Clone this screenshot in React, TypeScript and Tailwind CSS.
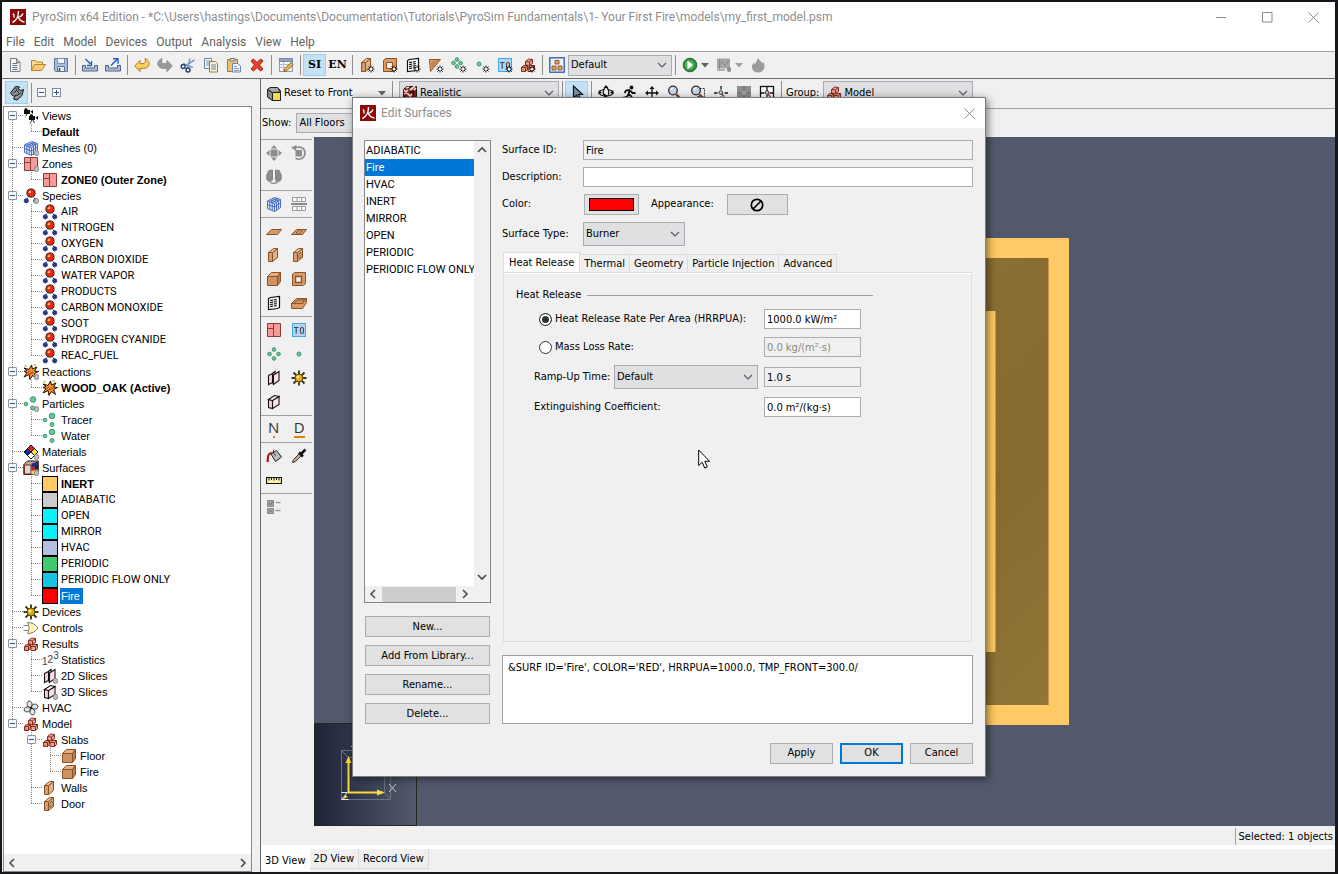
import React, { useState } from "react";
import type { ReactNode } from "react";

/* ------------------------------------------------------------------ */
/* Icons, all drawn on a 16 x 16 grid                                  */
/* ------------------------------------------------------------------ */

function Svg({ children, size = 16 }: { children: ReactNode; size?: number }) {
  return (
    <svg width={size} height={size} viewBox="0 0 16 16" fill="none" aria-hidden="true" className="block shrink-0">
      {children}
    </svg>
  );
}

const spark = (
  <g stroke="#111" strokeWidth="1">
    <path d="M12 8.500v7M8.500 12h7M9.500 9.500l5 5M14.500 9.500l-5 5" />
    <circle cx="12" cy="12" r="1.200" fill="#fff" stroke="none" />
  </g>
);

const pill = <rect x="11.500" y="10.500" width="4" height="5" rx="1.800" fill="#bdbdbd" stroke="#8a8a8a" />;

const Blocks = (
  <g fill="#e8a796" stroke="#8a2a20">
    <path d="M5.500 4.500l3-2.500 4 .5v4l-3 2-4-.5z" />
    <path d="M5.500 4.500l4 .5v4M9.500 5l3-2.500" />
    <path fill="#d8915a" d="M1.500 10.500l2-2h4v4l-2 2h-4z" />
    <path d="M1.500 10.500h4v4M5.500 10.500l2-2" />
    <path d="M8 10.500l2-2h4.500v4l-2 2H8z" />
    <path d="M8 10.500h4.500v4M12.500 10.500l2-2" />
  </g>
);

const Slice = (
  <g stroke="#1a0d14" strokeWidth="1.100">
    <path fill="#f6d3e3" d="M2.500 5.500l4-2v9l-4 2z" />
    <path fill="#fbe4ef" d="M7.500 5l5.500-3.500v9l-5.500 4z" />
    <path d="M6.500 3.500l2.500-2v2.500M6.500 12.500l1 2" />
  </g>
);

const Block3 = (
  <g fill="#cf9260" stroke="#8b5328">
    <path fill="#e3b184" d="M1.500 5.500l4-4h9l-3 4z" />
    <path fill="#b87b49" d="M11.500 5.500l3-4v9l-3 4z" />
    <path d="M1.500 5.500h10v9h-10z" />
  </g>
);

const Wall = (
  <g fill="#d89b69" stroke="#8b5328">
    <path d="M2.500 5.500l4 0v9l-4 0z" />
    <path fill="#e3b184" d="M6.500 5.500l5-4v9l-5 4z" />
    <path fill="#e9c29c" d="M2.500 5.500l5-4h4l-5 4z" />
  </g>
);

const Vent = (
  <g stroke="#111" strokeWidth="1.200">
    <path fill="#fff" d="M2.500 3.500l2-1 9-1v11l-2 1-9 1z" />
    <path d="M4 5.500l7.500-1M4 7.500l7.500-1M4 9.500l7.500-1M4 11.500l7.500-1" strokeDasharray="3 .8" />
  </g>
);

const Mesh = (
  <g stroke="#3a62b8" strokeWidth=".9">
    <path fill="#dfe8fa" d="M1.500 5l7-3.500 6 2v8l-6 4-7-3z" />
    <path d="M1.500 5l7 2.500v8M8.500 7.500l6-4M1.500 8.500l7 2.500 6-4M3.800 5.900v7.800M6.200 6.700v7.800M10.500 6.300v8M12.500 5v8M3.800 3.800l6.500 2.400M6 2.600l6.500 2.200M4 6l6.500-3.800M6.200 6.700l6.300-3.900" />
  </g>
);

const Zone = (
  <g stroke="#8d3a3a" fill="#f39c98">
    <path d="M1.500 1.500h13v13h-13zM7.500 1.500v13M1.500 6.500h6" />
  </g>
);

const Molecule = (
  <g>
    <circle cx="8" cy="5" r="4.100" fill="#f4280b" stroke="#2b1a1a" />
    <path d="M5.500 4.500a2.500 2.500 0 012.500-2v2.500H5.500z" fill="#ffb38a" />
    <path d="M5 9.500l-1 1.500M11 9.500l1 1.500" stroke="#333" />
    <circle cx="3.300" cy="12.800" r="2.100" fill="#27368f" stroke="#2f3c86" />
    <circle cx="12.700" cy="12.800" r="2.100" fill="#27368f" stroke="#2f3c86" />
  </g>
);

const Burst = (
  <g>
    <path d="M1 4l5 1.500L8.500 1l1 4L14 3l-2.500 4 4 .5-4 2 2 5-4-3-2.500 4-1-5L1 13l3-4.500L1 7.500l3-1z" fill="#f59a1c" stroke="#1c0d05" strokeWidth="1" />
    <path d="M5.500 6.500l4.500 0 1 2.500-4 1.500-2-1.500z" fill="#e03a1e" />
    <path d="M7 6.500l2 2M6 8l1 1M9 6.500l1 1" stroke="#ffe94f" />
    <path d="M1.500 1.500l2 1M11 .500l2 1M14 13l-1-1" stroke="#c9c31c" strokeWidth="1.500" />
  </g>
);

const dot = (cx: number, cy: number, r: number) => (
  <circle key={`${cx}-${cy}`} cx={cx} cy={cy} r={r} fill="#6cc796" stroke="#3a9a6c" strokeWidth="1" />
);

const Gear = (
  <g>
    <path d="M8 .500v15M.500 8h15M2.500 2.500l11 11M13.500 2.500l-11 11" stroke="#3a3a1c" strokeWidth="1.900" />
    <circle cx="8" cy="8" r="4" fill="#e0a912" stroke="#5a480c" />
    <circle cx="7" cy="7" r="1.500" fill="#fbe88a" />
  </g>
);

const Magnifier = (
  <g>
    <path d="M9.500 9.500l4.500 5" stroke="#7a3c1c" strokeWidth="2.500" />
    <circle cx="6" cy="5.500" r="4.300" fill="#c9d3e6" stroke="#2b2b38" strokeWidth="1.300" />
    <path d="M4 5a2 2 0 012-2" stroke="#fff" />
  </g>
);

const icons: Record<string, ReactNode> = {
  new: (
    <>
      <path d="M3.500 1.500h6l3.500 3.500v9.500h-9.500z" fill="#fdf8e4" stroke="#7a7a8a" />
      <path d="M9.500 1.500v4H13" fill="#e9c96b" stroke="#7a7a8a" />
      <path d="M5.500 6.500h5M5.500 8.500h5M5.500 10.500h5M5.500 12.500h5" stroke="#4f74a8" />
    </>
  ),
  open: (
    <>
      <path d="M1.500 13.500v-10h4l1 1.500h6v3" fill="#f8dc94" stroke="#b5832c" />
      <path d="M1.500 13.500l3-6h11l-4 6z" fill="#f6cf75" stroke="#b5832c" />
    </>
  ),
  save: (
    <>
      <path d="M1.500 1.500h13v13h-12l-1-1z" fill="#a9bddb" stroke="#5c7399" />
      <path d="M4.500 1.500h7v5h-7z" fill="#f5f8fd" stroke="#7d8fae" />
      <path d="M4.500 9.500h7v5h-7z" fill="#e9edf4" stroke="#5c7399" />
      <path d="M6.500 11v3" stroke="#33445f" strokeWidth="1.500" />
    </>
  ),
  import: (
    <>
      <path d="M.500 8.500v5.500h15V8.500h-3v2.500h-9V8.500z" fill="#a9bddb" stroke="#4e6285" />
      <path d="M3.500 2l5 5M9.500 4v4.500H5" stroke="#1d5fc0" strokeWidth="1.400" />
    </>
  ),
  export: (
    <>
      <path d="M.500 8.500v5.500h15V8.500h-3v2.500h-9V8.500z" fill="#a9bddb" stroke="#4e6285" />
      <path d="M6 8.500l6.500-6.500M8 1.700h5v5" stroke="#1d5fc0" strokeWidth="1.400" />
    </>
  ),
  undo: <path d="M.800 9l5.200-5.500v3.200h3c2.200 0 3-1.700 2-5.200 3.300 1.500 4.800 4 4 6.500-.800 2.300-3 3.300-5.500 3.300H6v3.200z" fill="#fbd25e" stroke="#b5761a" />,
  redo: <path d="M15.200 9L10 3.500v3.200H7c-2.200 0-3-1.700-2-5.200C1.700 3 .200 5.500 1 8c.800 2.300 3 3.300 5.500 3.300H10v3.200z" fill="#9a9a9a" stroke="#8a8a8a" />,
  cut: (
    <>
      <path d="M3 6.500l10 4M10 1.500L7.500 11M14.500 3L5 9" stroke="#7d9ac8" strokeWidth="1.500" />
      <circle cx="3.200" cy="9.500" r="2" stroke="#20406f" strokeWidth="1.400" />
      <circle cx="8" cy="13" r="2" stroke="#20406f" strokeWidth="1.400" />
    </>
  ),
  copy: (
    <>
      <path d="M1.500 1.500h7v10h-7z" fill="#f8f3df" stroke="#6d86ad" />
      <path d="M3 4h4M3 6h3M3 8h3" stroke="#7d9ac4" />
      <path d="M6.500 4.500h6l2 2v8.500h-8z" fill="#fbf3d2" stroke="#8a7f4c" />
      <path d="M8 8h5M8 10h5M8 12h5" stroke="#5b84c0" />
    </>
  ),
  paste: (
    <>
      <path d="M1.500 2.500h10v12h-10z" fill="#edc46b" stroke="#a77a26" />
      <path d="M4 1.500h5v2.500H4z" fill="#d5d9e0" stroke="#7a7f8a" />
      <path d="M6.500 6.500h5l3 2.500v6h-8z" fill="#f1f5fb" stroke="#6e86aa" />
      <path d="M8 9.500h3M8 11.500h5M8 13.500h5" stroke="#7d9ac4" />
    </>
  ),
  delete: <path d="M2 4l2.500-2L8 5.500 11.500 2 14 4l-3.500 4L14 12l-2.500 2L8 10.500 4.500 14 2 12l3.500-4z" fill="#e8402a" stroke="#a8200f" />,
  table: (
    <>
      <path d="M1.500 1.500h13v13h-13z" fill="#f4f6f8" stroke="#8a94a4" />
      <path d="M1.500 1.500h13v3h-13z" fill="#8fa3c4" stroke="#7888a4" />
      <path d="M1.500 7.500h13M1.500 10.500h13M5.500 5v9" stroke="#b5bcc6" />
      <path d="M6 14.500l1-3 6-6 2 2-6 6z" fill="#f0b94c" stroke="#8a6420" />
    </>
  ),
  wallNew: (<>{Wall}{spark}</>),
  holeNew: (
    <>
      <path d="M1.500 3.500l2-2h11v11l-2 2h-11z" fill="#d89b69" stroke="#8b5328" />
      <path d="M4.500 5.500h6v6h-6z" fill="#f7ede2" stroke="#8b5328" />
      {spark}
    </>
  ),
  ventNew: (<>{Vent}{spark}</>),
  triNew: (
    <>
      <path d="M1.500 2.500h11l-10 12z" fill="#e0a06c" stroke="#8b5328" />
      <path d="M3.500 4.500l8-1.500-8 9z" fill="#c4834f" />
      {spark}
    </>
  ),
  cloudNew: (<>{dot(6, 2.5, 1.8)}{dot(2.5, 6, 1.8)}{dot(9.5, 6, 1.8)}{dot(6, 9.5, 1.8)}{spark}</>),
  dotNew: (<>{dot(5, 7, 2)}{spark}</>),
  t0: (
    <>
      <rect x="1.500" y="1.500" width="13" height="13" fill="#b4d4f0" stroke="#3daaf0" />
      <path d="M3 5.500h4.500M5.200 5.500v6M9.500 7q0-1.500 1.500-1.500T12.500 7v3q0 1.500-1.500 1.500T9.500 10z" stroke="#3a4656" strokeWidth="1.100" />
    </>
  ),
  t0New: (
    <>
      <rect x="1.500" y="1.500" width="13" height="13" fill="#b4d4f0" stroke="#3daaf0" />
      <path d="M3 5.500h4.500M5.200 5.500v6M9.500 7q0-1.500 1.500-1.500T12.500 7v3q0 1.500-1.500 1.500T9.500 10z" stroke="#3a4656" strokeWidth="1.100" />
      {spark}
    </>
  ),
  blocksNew: (<>{Blocks}{spark}</>),
  floors: (
    <>
      <rect x=".800" y=".800" width="14.400" height="14.400" fill="#eef2fb" stroke="#2f56a8" strokeWidth="1.300" />
      <path d="M6 3.500h4v3.500H6zM3 9h4v4H3zM9 9h4v4H9z" fill="#dca268" stroke="#8b5a2b" />
    </>
  ),
  run: (
    <>
      <circle cx="8" cy="8" r="6.800" fill="#2f8f3a" stroke="#1f6f2a" />
      <circle cx="7.500" cy="8" r="4.700" fill="#58b060" />
      <path d="M5.500 3.500l5.500 4.500-5.500 4.500z" fill="#fff" />
    </>
  ),
  chart: (
    <>
      <path d="M1 1.500h13v10H1z" fill="#a6a6a6" />
      <path d="M3.500 2v10M3 9.500l3-5 3 4 4-5" stroke="#8a8a8a" />
      <path d="M1 13h8" stroke="#9a9a9a" strokeWidth="1.500" />
      <rect x="11" y="10" width="4" height="5" rx="2" fill="#8d8d8d" />
    </>
  ),
  flame: (
    <path d="M8 .500c.500 3 4 3.500 4 6l1.500-1.500c1 2.500 1.500 4.500.500 6.500C13 14 11 15.500 8 15.500S3 14 2.200 11.500C1.500 9 2.500 7 4 5.500l1 2c.500-2.500 2.500-4 3-7z" fill="#9b9b9b" />
  ),
  refresh: (
    <>
      <path d="M1.500 8l5-6.500 4 .5-1.500 2 3 1.500 2.500-1-1.500 6-5 4.500-3.500-1 1.500-2.500-2.500-1z" fill="#8e959c" stroke="#111" />
      <path d="M4.500 8l3-2.500 2.500 2M6 10.500l3-.5 3-2.500M8 4.500l-1.500-1" stroke="#111" />
    </>
  ),
  cube: (
    <>
      <path d="M1.500 3.500l3-2h7l3 3v10h-8l-5-3.500z" fill="#fff" stroke="#222" />
      <path d="M1.500 3.500l5 3v8l-5-3.500z" fill="#8d8d8d" stroke="#222" />
      <path d="M1.500 3.500l3-2h7l3 4.500-8 .5z" fill="#a9a9a9" stroke="#222" />
      <path d="M6.500 6.500h8v8h-8z" fill="#f5d94e" stroke="#222" />
    </>
  ),
  realistic: (
    <>
      <path d="M1.500 4.500l3-3h10v10l-3 3h-10z" fill="#8e1f1b" stroke="#1c1010" />
      <path d="M2 5l4 4M6 5l-4 4M6 9l4 4M10 9l-4 4M8 5l5-4M11 6l3-3M4 3l3-1" stroke="#e9e0dc" strokeWidth="1.700" />
      <path d="M11.500 5v9M2 11l3 3M8 7l3 0" stroke="#1c1010" strokeWidth="1.400" />
    </>
  ),
  pointer: <path d="M4.500 1v12l3-2.800 2 4.800 2-1-2-4.700h4z" fill="#7c93a8" stroke="#111" strokeWidth="1.200" />,
  orbit: (
    <>
      <path d="M6.500 4.500C3.500 4.800 1.500 6 1.500 7.800c0 2 3 3.200 6.500 3.200s6.500-1.200 6.500-3.200c0-1.800-2-3-5-3.300" stroke="#111" strokeWidth="1.200" />
      <path d="M5.500 10C4.500 6 6 2.500 8 2.500s3.500 3.500 2.500 7.500" stroke="#111" strokeWidth="1.200" />
      <path d="M8 0l2.500 3h-5zM6 8.500l4 2.500-4 2.500zM1 5l3 3-4 1zM15 5l-3 3 4 1z" fill="#111" />
    </>
  ),
  walk: (
    <>
      <circle cx="10.500" cy="2.500" r="1.900" fill="#111" />
      <path d="M9 5L7.500 9l3 2.500-1.500 4M7.500 9L6 12l-4.500 1M9 5L5 5.500 3.500 8M9.500 6l2 2h3" stroke="#111" strokeWidth="1.800" />
    </>
  ),
  pan: (
    <>
      <path d="M8 2v12M2 8h12" stroke="#111" strokeWidth="1.300" />
      <path d="M8 1l2.500 3h-5zM8 15l2.500-3h-5zM1 8l3-2.500v5zM15 8l-3-2.500v5z" fill="#111" />
    </>
  ),
  zoom: Magnifier,
  zoomBox: (
    <>
      <path d="M6.500 3.500h8v8h-8" stroke="#333" strokeDasharray="2 1" />
      {Magnifier}
    </>
  ),
  fit: (
    <>
      <path d="M8 1v3.500M8 11.500V15M1 8h3.500M11.500 8H15" stroke="#111" strokeWidth="1.300" />
      <path d="M8 8l3 3.500" stroke="#7a3c1c" strokeWidth="1.500" />
      <circle cx="7.800" cy="7.500" r="1.800" fill="#c9d3e6" stroke="#333" />
    </>
  ),
  fitSel: (
    <>
      <rect x="1" y="1" width="14" height="14" fill="#8f8f8f" />
      <path d="M8 1v5M8 10v5M1 8h5M10 8h5" stroke="#777" strokeWidth="1.500" />
      <circle cx="8" cy="8" r="2" fill="#a5a5a5" />
    </>
  ),
  fitAll: (
    <>
      <rect x="1.500" y="1.500" width="13" height="13" fill="#fff" stroke="#111" strokeWidth="1.300" />
      <path d="M8 2v4M8 10v4M2 8h3.500M10.500 8H14" stroke="#111" strokeWidth="1.300" />
      <path d="M8.500 8.500l3 3.500" stroke="#a3402c" strokeWidth="1.500" />
      <circle cx="8" cy="7.500" r="1.800" fill="#c9d3e6" stroke="#333" />
    </>
  ),
  blocks: Blocks,
  move: (
    <g fill="#8b8d90">
      <rect x="4.500" y="4.500" width="7" height="7" />
      <path d="M8 0l3 3.500H5zM8 16l3-3.500H5zM0 8l3.500-3v6zM16 8l-3.500-3v6z" />
    </g>
  ),
  rotate: (
    <>
      <rect x="4.500" y="5" width="6.500" height="6.500" fill="#8b8d90" />
      <path d="M4.500 2.500c5.500-1.500 9.500 1 9.500 5.500s-4.500 7.500-9.500 5.500" stroke="#8b8d90" strokeWidth="1.700" />
      <path d="M0 2.500l5.500-2.500-.5 6z" fill="#8b8d90" />
    </>
  ),
  mirror: (
    <>
      <path d="M.800 6l2-4.500L6.500 1v10l-3.500 1.500-2.200-2zM15.200 6l-2-4.500L9.500 1v10l3.500 1.500 2.200-2z" fill="#8b8d90" stroke="#7f8185" />
      <path d="M4 13c2.500 2 5 2 8 0M10.500 11.500l-.5 3" stroke="#8b8d90" strokeWidth="1.500" />
    </>
  ),
  mesh: Mesh,
  meshes: (<>{Mesh}{pill}</>),
  align: (
    <>
      <path d="M1.500 1.500h13v4h-13zM6 1.500v4M10.500 1.500v4M1.500 10.500h13v4h-13zM6 10.500v4M10.500 10.500v4" fill="#fff" stroke="#9a9a9a" />
      <path d="M0 8h16" stroke="#8a8a8a" strokeWidth="2" />
    </>
  ),
  slab: <path d="M.500 11.500l5-5h10l-4 5H.500z" fill="#d69a6a" stroke="#8b5328" />,
  slabHole: (
    <>
      <path d="M.500 11.500l5-5h10l-4 5H.500z" fill="#d69a6a" stroke="#8b5328" />
      <path d="M5 10l2-2h4l-1.500 2z" fill="#f3e3d2" stroke="#8b5328" />
    </>
  ),
  wall: Wall,
  wallHole: (
    <>
      {Wall}
      <path d="M8 7l2-2v5l-2 1.500z" fill="#f3e3d2" stroke="#8b5328" />
    </>
  ),
  block: Block3,
  blockHole: (
    <>
      <path d="M1.500 3.500l2-2h11v11l-2 2h-11z" fill="#d89b69" stroke="#8b5328" />
      <path d="M4.500 5.500h6v6h-6z" fill="#f7ede2" stroke="#8b5328" strokeWidth="1.400" />
    </>
  ),
  vent: Vent,
  tray: (
    <>
      <path d="M.500 8.500l5-5h10v4l-4 6h-11z" fill="#d69a6a" stroke="#8b5328" />
      <path d="M.500 8.500h11l4-5M3.500 8l3-3h7l-2 3" fill="#b87b49" stroke="#8b5328" />
    </>
  ),
  zone: Zone,
  zones: (<>{Zone}{pill}</>),
  cloud: (<>{dot(8, 3.5, 1.8)}{dot(3.5, 8, 1.8)}{dot(12.5, 8, 1.8)}{dot(8, 12.5, 1.8)}</>),
  dot: dot(8, 8, 2),
  slice2: Slice,
  slice2s: (<>{Slice}{pill}</>),
  slice3: (
    <g stroke="#1a0d14" strokeWidth="1.100">
      <path fill="#f6d3e3" d="M2.500 5.500l4 1v8l-4-1z" />
      <path fill="#fbe4ef" d="M6.500 6.500l6.500-4v8l-6.500 4z" />
      <path fill="#fff" d="M2.500 5.500l6-4 4.500 1-6.500 4z" />
    </g>
  ),
  slice3s: (
    <>
      <g stroke="#1a0d14" strokeWidth="1.100">
        <path fill="#f6d3e3" d="M2.500 5.500l4 1v8l-4-1z" />
        <path fill="#fbe4ef" d="M6.500 6.500l6.500-4v8l-6.500 4z" />
        <path fill="#fff" d="M2.500 5.500l6-4 4.500 1-6.500 4z" />
      </g>
      {pill}
    </>
  ),
  gear: Gear,
  bucket: (
    <>
      <path d="M5 6l5.500-3.500L15.500 9 9.500 13.500z" fill="#b9bcc0" stroke="#222" />
      <path d="M6.500 5C2.500 5 1.700 7 1.700 14" stroke="#b01818" strokeWidth="2.200" />
      <path d="M8 1.500c-1.500 2 0 5 2 6" stroke="#222" />
    </>
  ),
  dropper: (
    <>
      <path d="M1.500 14.500l1-3 6-6 2 2-6 6z" fill="#c8a78f" stroke="#333" />
      <path d="M8 4.500l4 4M10.500 5.500l4-4" stroke="#111" strokeWidth="2.500" />
    </>
  ),
  ruler: (
    <>
      <path d="M.500 5.500h15v6H.500z" fill="#fdf3a8" stroke="#111" strokeWidth="1.200" />
      <path d="M3 6v2.500M5.500 6v2M8 6v2.500M10.500 6v2M13 6v2.500" stroke="#111" />
    </>
  ),
  checks: (
    <>
      <path d="M1.500 1.500h6v6h-6zM1.500 9.500h6v5h-6z" fill="#a2a2a2" stroke="#8a8a8a" />
      <path d="M3 4l1.500 2 2.500-3.500M3.500 12h2.500" stroke="#6d6d6d" />
      <path d="M9.500 3.500h5M9.500 11.500h5" stroke="#999" strokeWidth="1.500" />
    </>
  ),
  views: (
    <>
      <path d="M1 2h6v4H1zM7.500 3.500l2.500-1.500v4zM6 8h6v4H6zM12.500 9.500l2.500-1.500v4z" fill="#111" />
      <circle cx="3" cy="1.500" r="1.500" fill="#111" />
      <circle cx="8.500" cy="7.500" r="1.500" fill="#111" />
      <path d="M4 6l-1.500 2.500M9 12l-2 3.500M10 12l1.500 3" stroke="#333" />
    </>
  ),
  molecule: Molecule,
  molecules: (<>{Molecule}{pill}</>),
  burst: Burst,
  bursts: (<>{Burst}{pill}</>),
  particles: (<>{dot(10, 4, 2.8)}{dot(3, 8, 1.8)}{dot(10, 12.5, 2)}</>),
  particleGroup: (<>{dot(10, 3.5, 2.8)}{dot(3, 8, 1.8)}{dot(9.5, 12, 2)}{pill}</>),
  materials: (
    <>
      <path d="M8 1l3.500 3.500L8 8 4.500 4.500z" fill="#e02020" />
      <path d="M4.500 4.500L8 8l-3.500 3.500L1 8z" fill="#1b2a9a" />
      <path d="M11.500 4.500L15 8l-3.500 3.500L8 8z" fill="#f3e13a" />
      <path d="M8 8l3.500 3.500L8 15l-3.500-3.500z" fill="#fff" />
      <path d="M8 1l7 7-7 7-7-7zM4.500 4.500l7 7M11.500 4.500l-7 7" stroke="#111" />
      {pill}
    </>
  ),
  surfaces: (
    <>
      <path d="M.800 4.500l3.500-3.500h11v10.500l-3 3H.800z" fill="#c9a79c" stroke="#3a1510" />
      <path d="M1.500 5h6.500v9H1.500z" fill="#d7d8da" stroke="#7d2b1f" />
      <path d="M8.500 3.500l6.500-2v4l-6.500 2.500z" fill="#1a2f8a" />
      <path d="M8.500 8l3.500-1.500v3L8.500 11z" fill="#c62222" />
      <path d="M8.500 11h3v3.500h-3z" fill="#f3d23a" />
      <path d="M12 6v4l3-1V5z" fill="#222" />
      {pill}
    </>
  ),
  gate: (
    <>
      <path d="M4.500 2.500c5 0 8 2 10.500 5.500-2.500 3.500-5.500 5.500-10.500 5.500 2-3.500 2-7.500 0-11z" fill="#fdf3c4" stroke="#8d8154" />
      <path d="M.500 5.500h5M.500 10.500h5" stroke="#7a7a7a" />
    </>
  ),
  fan: (
    <>
      <path d="M8 8C4.500 7.500 3 4 5 1.500c3.500-1.500 5.500 2.500 3 6.500zM8 8c.500-3.500 4-5 6.500-3 1.500 3.500-2.500 5.500-6.500 3zM8 8c3.500.500 5 4 3 6.500-3.500 1.500-5.500-2.500-3-6.500zM8 8c-.500 3.500-4 5-6.500 3C0 7.500 4 5.500 8 8z" fill="#e2e4e6" stroke="#3b3b3b" />
      <circle cx="8" cy="8" r="1.200" fill="#222" />
    </>
  ),
};

function Icon({ name }: { name: string }) {
  return <Svg>{icons[name]}</Svg>;
}

function Logo() {
  return (
    <svg width="16" height="16" viewBox="0 0 16 16" aria-hidden="true" className="block shrink-0">
      <rect width="16" height="16" fill="#8b0a08" />
      <path d="M8.500 2c0 5-1 9-6 11.500M8 7.500c1 3 3 5 6.500 5.500M3 4.500c1 1 1.500 2 1 4M13 4.500c-.500 1.500-1.500 2.500-3.500 3.500" stroke="#fff" strokeWidth="1.400" fill="none" />
    </svg>
  );
}

function Chevron({ dir }: { dir: "down" | "up" | "left" | "right" }) {
  const d = {
    down: "M1 3l4 4 4-4",
    up: "M1 7l4-4 4 4",
    left: "M7 1L3 5l4 4",
    right: "M3 1l4 4-4 4",
  }[dir];
  return (
    <svg width="10" height="10" viewBox="0 0 10 10" fill="none" aria-hidden="true" className="block shrink-0">
      <path d={d} stroke="#4a4a52" strokeWidth={1.6} />
    </svg>
  );
}

/* ------------------------------------------------------------------ */
/* Shared controls                                                     */
/* ------------------------------------------------------------------ */

function ToolButton({ name, label }: { name: string; label: string }) {
  return (
    <button type="button" title={label} aria-label={label} className="flex h-6 w-[23px] shrink-0 items-center justify-center">
      <Icon name={name} />
    </button>
  );
}

function Sep() {
  return (
    <span className="flex w-1.5 shrink-0 justify-center">
      <span className="h-5 w-px bg-[#8d8d8d]" />
    </span>
  );
}

function Caret({ dim = false, label }: { dim?: boolean; label: string }) {
  return (
    <button type="button" aria-label={label} className="flex h-6 w-[11px] shrink-0 items-center">
      <svg width="8" height="5" viewBox="0 0 8 5" aria-hidden="true">
        <path d="M0 0h8L4 4.500z" fill={dim ? "#a0a0a0" : "#606060"} />
      </svg>
    </button>
  );
}

function Select({ id, label, value, width, icon }: { id: string; label?: string; value: string; width: string; icon?: string }) {
  return (
    <span className={`relative flex h-6 shrink-0 items-center border border-[#a9abb3] bg-[#dfe0e2] ${width}`}>
      {icon && (
        <span className="pl-0.5">
          <Icon name={icon} />
        </span>
      )}
      <select id={id} aria-label={label} defaultValue={value} className="h-full w-full min-w-0 appearance-none bg-transparent pt-px pr-5 pl-0.5 outline-none">
        <option value={value}>{value}</option>
      </select>
      <span className="pointer-events-none absolute right-1">
        <svg width="10" height="10" viewBox="0 0 10 10" fill="none" aria-hidden="true" className="block">
          <path d="M1 3l4 4 4-4" stroke="#5a5a62" strokeWidth="1.200" />
        </svg>
      </span>
    </span>
  );
}

/* ------------------------------------------------------------------ */
/* Window chrome                                                       */
/* ------------------------------------------------------------------ */

function TitleBar() {
  return (
    <header className="border-b border-[#a0a0a0] bg-white font-['Roboto',sans-serif] text-[12px]">
      <div className="flex h-[30px] items-center pr-4 pl-2 text-[#8e8e8e]">
        <Logo />
        <h1 className="flex-1 truncate pl-1.5">
          PyroSim x64 Edition - *C:\Users\hastings\Documents\Documentation\Tutorials\PyroSim Fundamentals\1- Your First Fire\models\my_first_model.psm
        </h1>
        <div className="flex gap-[35px]">
          {[
            ["Minimize", "M0 5.500h10"],
            ["Maximize", "M.500.500h9.500v9.500H.500z"],
            ["Close", "M.500.500l10 10M10.500.500l-10 10"],
          ].map(([label, d]) => (
            <button key={label} type="button" aria-label={label}>
              <svg width="11" height="11" viewBox="0 0 11 11" fill="none" aria-hidden="true">
                <path d={d} stroke="#8a8a8a" />
              </svg>
            </button>
          ))}
        </div>
      </div>
      <nav className="flex h-[19px] items-center gap-[9px] pl-1 text-[#5f635f]">
        {["File", "Edit", "Model", "Devices", "Output", "Analysis", "View", "Help"].map((m) => (
          <button key={m} type="button">
            {m}
          </button>
        ))}
      </nav>
    </header>
  );
}

function MainToolbar() {
  return (
    <div className="flex h-[27px] items-center overflow-hidden border-b border-[#696969] pl-px">
      <ToolButton name="new" label="New" />
      <ToolButton name="open" label="Open" />
      <ToolButton name="save" label="Save" />
      <Sep />
      <ToolButton name="import" label="Import" />
      <ToolButton name="export" label="Export" />
      <Sep />
      <ToolButton name="undo" label="Undo" />
      <ToolButton name="redo" label="Redo" />
      <ToolButton name="cut" label="Cut" />
      <ToolButton name="copy" label="Copy" />
      <ToolButton name="paste" label="Paste" />
      <ToolButton name="delete" label="Delete" />
      <Sep />
      <ToolButton name="table" label="Edit records" />
      <Sep />
      <button type="button" className="h-[22px] w-[23px] border border-[#99d1f5] bg-[#c4e2f3] font-['DejaVu_Serif',serif] text-[11px] font-bold text-black">SI</button>
      <button type="button" className="h-[22px] w-[23px] font-['DejaVu_Serif',serif] text-[11px] font-bold text-black">EN</button>
      <Sep />
      <ToolButton name="wallNew" label="New wall" />
      <ToolButton name="holeNew" label="New hole" />
      <ToolButton name="ventNew" label="New vent" />
      <ToolButton name="triNew" label="New triangle" />
      <ToolButton name="cloudNew" label="New particle cloud" />
      <ToolButton name="dotNew" label="New particle" />
      <ToolButton name="t0New" label="New initial region" />
      <ToolButton name="blocksNew" label="New group" />
      <Sep />
      <ToolButton name="floors" label="Manage configurations" />
      <Select id="config" label="Configuration" value="Default" width="w-[104px] h-[21px]!" />
      <Sep />
      <ToolButton name="run" label="Run" />
      <Caret label="Run options" />
      <ToolButton name="chart" label="Plot results" />
      <Caret dim label="Plot options" />
      <ToolButton name="flame" label="View results" />
    </div>
  );
}

/* ------------------------------------------------------------------ */
/* Model tree                                                          */
/* ------------------------------------------------------------------ */

type Node = {
  label: string;
  icon?: string;
  swatch?: string;
  bold?: boolean;
  selected?: boolean;
  children?: Node[];
};

const species = ["AIR", "NITROGEN", "OXYGEN", "CARBON DIOXIDE", "WATER VAPOR", "PRODUCTS", "CARBON MONOXIDE", "SOOT", "HYDROGEN CYANIDE", "REAC_FUEL"];

const tree: Node[] = [
  { label: "Views", icon: "views", children: [{ label: "Default", bold: true }] },
  { label: "Meshes (0)", icon: "meshes" },
  { label: "Zones", icon: "zones", children: [{ label: "ZONE0 (Outer Zone)", icon: "zone", bold: true }] },
  { label: "Species", icon: "molecules", children: species.map((label) => ({ label, icon: "molecule" })) },
  { label: "Reactions", icon: "bursts", children: [{ label: "WOOD_OAK (Active)", icon: "burst", bold: true }] },
  {
    label: "Particles",
    icon: "particleGroup",
    children: [
      { label: "Tracer", icon: "particles" },
      { label: "Water", icon: "particles" },
    ],
  },
  { label: "Materials", icon: "materials" },
  {
    label: "Surfaces",
    icon: "surfaces",
    children: [
      { label: "INERT", swatch: "bg-[#ffc966]", bold: true },
      { label: "ADIABATIC", swatch: "bg-[#cccccc]" },
      { label: "OPEN", swatch: "bg-[#0cf0fc]" },
      { label: "MIRROR", swatch: "bg-[#0cf0fc]" },
      { label: "HVAC", swatch: "bg-[#b3bfe3]" },
      { label: "PERIODIC", swatch: "bg-[#3ec870]" },
      { label: "PERIODIC FLOW ONLY", swatch: "bg-[#16c6e0]" },
      { label: "Fire", swatch: "bg-[#fe0000]", selected: true },
    ],
  },
  { label: "Devices", icon: "gear" },
  { label: "Controls", icon: "gate" },
  {
    label: "Results",
    icon: "blocks",
    children: [
      { label: "Statistics", icon: "stats" },
      { label: "2D Slices", icon: "slice2s" },
      { label: "3D Slices", icon: "slice3s" },
    ],
  },
  { label: "HVAC", icon: "fan" },
  {
    label: "Model",
    icon: "blocks",
    children: [
      {
        label: "Slabs",
        icon: "blocks",
        children: [
          { label: "Floor", icon: "block" },
          { label: "Fire", icon: "block" },
        ],
      },
      { label: "Walls", icon: "wall" },
      { label: "Door", icon: "wallHole" },
    ],
  },
];

function Guide({ up, down, across }: { up: boolean; down: boolean; across: boolean }) {
  return (
    <svg width="19" height="16" viewBox="0 0 19 16" aria-hidden="true" className="block">
      <g stroke="#8a8a8a" strokeDasharray="1 1">
        {up && <path d="M8.500 0v8" />}
        {down && <path d="M8.500 8v8" />}
        {across && <path d="M8 7.500h11" />}
      </g>
    </svg>
  );
}

function Toggle({ open, label, onClick }: { open: boolean; label: string; onClick: () => void }) {
  return (
    <button
      type="button"
      aria-label={label}
      aria-expanded={open}
      onClick={onClick}
      className="absolute top-[3px] left-1 flex size-[9px] items-center justify-center rounded-[1px] border border-[#8d95a3] bg-[#f4f6f9]"
    >
      <svg width="5" height="5" viewBox="0 0 5 5" aria-hidden="true">
        <path d={open ? "M0 2.500h5" : "M0 2.500h5M2.500 0v5"} stroke="#2b4fa0" />
      </svg>
    </button>
  );
}

function StatsIcon() {
  return (
    <span className="flex size-4 shrink-0 text-[10px] leading-4 text-[#444]" aria-hidden="true">
      <span className="pt-0.5">1</span>
      <span>2</span>
      <span className="-mt-1">3</span>
    </span>
  );
}

function TreeItem({ node, trail, first, last }: { node: Node; trail: boolean[]; first: boolean; last: boolean }) {
  const [open, setOpen] = useState(true);
  const record = !node.bold && trail.length > 0 && node.label === node.label.toUpperCase();
  return (
    <li>
      <div className="flex h-4 items-center whitespace-nowrap">
        {trail.map((line, i) => (
          <Guide key={i} up={line} down={line} across={false} />
        ))}
        <span className="relative shrink-0">
          <Guide up={!first} down={!last} across />
          {node.children && <Toggle open={open} label={`Toggle ${node.label}`} onClick={() => setOpen(!open)} />}
        </span>
        {node.icon === "stats" ? <StatsIcon /> : node.icon && <Icon name={node.icon} />}
        {node.swatch && <span className={`size-4 shrink-0 border border-black ${node.swatch}`} />}
        <span
          className={`h-4 leading-4 ${node.bold ? "font-bold" : ""} ${record ? "font-['Roboto',sans-serif]" : ""} ${
            node.icon ? "ml-[3px] pr-px" : node.swatch ? "ml-0.5 px-px" : ""
          } ${node.selected ? "bg-[#0078d7] pr-[3px] text-white" : "text-black"}`}
        >
          {node.label}
        </span>
      </div>
      {node.children && open && (
        <ul>
          {node.children.map((child, i, all) => (
            <TreeItem key={child.label} node={child} trail={[...trail, !last]} first={false} last={i === all.length - 1} />
          ))}
        </ul>
      )}
    </li>
  );
}

function TreePanel() {
  return (
    <aside className="flex w-[249px] shrink-0 flex-col">
      <div className="flex h-[27px] items-center pl-0.5">
        <button type="button" aria-label="Synchronize selection" className="flex size-[23px] items-center justify-center border border-[#99d1f5] bg-[#c4e2f3]">
          <Icon name="refresh" />
        </button>
        <Sep />
        <div className="flex gap-1.5 pl-[3px]">
          {["Collapse all", "Expand all"].map((label, i) => (
            <button key={label} type="button" aria-label={label} className="flex size-[9px] items-center justify-center border border-[#7f8a9c] bg-white">
              <svg width="5" height="5" viewBox="0 0 5 5" aria-hidden="true">
                <path d={i ? "M0 2.500h5M2.500 0v5" : "M0 2.500h5"} stroke="#2b4fa0" />
              </svg>
            </button>
          ))}
        </div>
      </div>
      <div className="flex flex-1 flex-col border border-[#828790] bg-white">
        <ul className="flex-1 overflow-hidden pt-px font-['Liberation_Sans',Arial,sans-serif] text-[11px]">
          {tree.map((node, i) => (
            <TreeItem key={node.label} node={node} trail={[]} first={i === 0} last={i === tree.length - 1} />
          ))}
        </ul>
        <div className="flex h-[17px] items-center justify-between bg-[#f0f0f0] px-[3px]">
          <button type="button" aria-label="Scroll left">
            <Chevron dir="left" />
          </button>
          <button type="button" aria-label="Scroll right">
            <Chevron dir="right" />
          </button>
        </div>
      </div>
    </aside>
  );
}

/* ------------------------------------------------------------------ */
/* 3D view                                                             */
/* ------------------------------------------------------------------ */

function ViewToolbar() {
  return (
    <div className="flex h-[30px] items-start overflow-hidden border-b border-[#a0a0a0] pt-0.5">
      <button type="button" className="flex h-6 w-[117px] shrink-0 items-center gap-0.5 pt-px pl-[5px]">
        <Icon name="cube" />
        Reset to Front
      </button>
      <Caret label="View presets" />
      <Sep />
      <span className="flex pl-1">
        <Select id="style" label="Render style" value="Realistic" width="w-[160px]" icon="realistic" />
      </span>
      <Sep />
      <button type="button" aria-label="Select" className="flex size-[23px] shrink-0 items-center justify-center border border-[#99d1f5] bg-[#c4e2f3]">
        <Icon name="pointer" />
      </button>
      <Sep />
      <ToolButton name="orbit" label="Orbit" />
      <ToolButton name="walk" label="Walk" />
      <ToolButton name="pan" label="Pan" />
      <ToolButton name="zoom" label="Zoom" />
      <ToolButton name="zoomBox" label="Zoom box" />
      <ToolButton name="fit" label="Reset view" />
      <ToolButton name="fitSel" label="Fit selection" />
      <ToolButton name="fitAll" label="Fit all" />
      <Sep />
      <label htmlFor="group" className="pr-1 pl-0.5 leading-6">
        Group:
      </label>
      <Select id="group" value="Model" width="w-[150px]" icon="blocks" />
    </div>
  );
}

const palette: [string, string][][] = [
  [["move", "Move"], ["rotate", "Rotate"], ["mirror", "Mirror"]],
  [["mesh", "Mesh"], ["align", "Align meshes"]],
  [["slab", "Slab"], ["slabHole", "Slab hole"], ["wall", "Wall"], ["wallHole", "Wall hole"], ["block", "Block"], ["blockHole", "Block hole"], ["vent", "Vent"], ["tray", "Room"]],
  [["zone", "Zone"], ["t0", "Initial region"], ["cloud", "Particle cloud"], ["dot", "Particle"], ["slice2", "2D slice"], ["gear", "Device"], ["slice3", "3D slice"]],
  [["N", "HVAC node"], ["D", "HVAC duct"]],
  [["bucket", "Paint"], ["dropper", "Pick color"], ["ruler", "Measure"]],
  [["checks", "Tool options"]],
];

function Palette() {
  return (
    <div className="w-[53px] shrink-0 pt-0.5 pr-0.5">
      {palette.map((group, i) => (
        <div key={i} className="grid grid-cols-2 border-t border-[#a0a0a0] py-px">
          {group.map(([name, label]) => (
            <button key={name} type="button" title={label} aria-label={label} className="flex h-6 items-center justify-center">
              {name.length === 1 ? (
                <span
                  className={`flex h-5 flex-col items-center font-['Open_Sans',sans-serif] text-[15px] leading-[17px] text-[#333] after:h-0.5 after:shrink-0 after:bg-[#e0820f] after:content-[''] ${
                    name === "N" ? "after:w-0.5" : "after:w-[11px]"
                  }`}
                >
                  {name}
                </span>
              ) : (
                <Icon name={name} />
              )}
            </button>
          ))}
        </div>
      ))}
    </div>
  );
}

function Viewport() {
  return (
    <div className="relative flex-1 overflow-hidden bg-[#53596c]">
      <svg className="absolute top-0 left-0 h-full w-full" aria-label="Top view of the model">
        <defs>
          <linearGradient id="floor" x1="0" y1="0" x2="1" y2="1">
            <stop offset="0" stopColor="#93763a" />
            <stop offset=".700" stopColor="#866a30" />
            <stop offset="1" stopColor="#927538" />
          </linearGradient>
        </defs>
        <rect x="240" y="101" width="515" height="487" fill="#fdca65" />
        <rect x="260" y="121" width="475" height="447" fill="url(#floor)" />
        <rect x="320" y="174" width="362" height="341" fill="#fdca65" />
        <path d="M681.500 174v341M734.500 121v447" stroke="#c99745" />
      </svg>
      <div className="absolute bottom-0 left-0 size-[103px] border border-[#22291f] bg-linear-to-r from-[#1e2438] to-[#535a6d]">
        <svg width="101" height="101" viewBox="0 0 101 101" fill="none" aria-hidden="true">
          <path d="M26.500 26.500h49v49h-49zM33.500 33.500h36v35h-36zM26.500 26.500l7 7M75.500 75.500l-6-7" stroke="#6d7280" />
          <path d="M33.500 68.500V37M33 68.500h30" stroke="#ffd83a" strokeWidth="2" />
          <path d="M33.500 32l3 7h-6zM70 68.500l-8-3v6zM28 75l2-4 3 2z" fill="#ffd83a" />
          <path d="M26.500 68.500h6l-6 7h7" stroke="#e8e8e8" />
          <path d="M74 60l7 8M81 60l-7 8M36 22l3 3 3-3M39 25v4" stroke="#c5c7cc" />
        </svg>
      </div>
    </div>
  );
}

function ViewPanel() {
  return (
    <main className="flex min-w-0 flex-1 flex-col border-l border-[#696969]">
      <ViewToolbar />
      <div className="flex h-7 items-center gap-[5px] pl-px">
        <label htmlFor="floor-filter">Show:</label>
        <Select id="floor-filter" value="All Floors" width="w-[160px] h-5!" />
      </div>
      <div className="flex flex-1">
        <Palette />
        <Viewport />
      </div>
      <div className="flex h-5 justify-end border-b border-white">
        <p className="mt-0.5 border-l border-[#a0a0a0] pr-0.5 pl-[3px] leading-[17px]">Selected: 1 objects</p>
      </div>
      <div className="flex h-[26px] items-start border-t-3 border-white pb-px">
        {["3D View", "2D View", "Record View"].map((tab, i) => (
          <button
            key={tab}
            type="button"
            role="tab"
            aria-selected={i === 0}
            className={i === 0 ? "h-[22px] bg-white px-1 pt-[3px]" : "h-5 border-r border-b border-[#d9d9d9] px-1 pt-0.5"}
          >
            {tab}
          </button>
        ))}
      </div>
    </main>
  );
}

/* ------------------------------------------------------------------ */
/* Edit Surfaces dialog                                                */
/* ------------------------------------------------------------------ */

const surfaces = ["ADIABATIC", "Fire", "HVAC", "INERT", "MIRROR", "OPEN", "PERIODIC", "PERIODIC FLOW ONLY"];

function SurfaceList() {
  const [current, setCurrent] = useState("Fire");
  return (
    <div className="flex h-[463px] flex-col border border-[#828790] bg-[#f0f0f0]">
      <div className="flex min-h-0 flex-1">
        <ul role="listbox" aria-label="Surfaces" className="min-w-0 flex-1 overflow-hidden bg-white pt-px font-['Roboto',sans-serif]">
          {surfaces.map((s) => (
            <li
              key={s}
              role="option"
              aria-selected={s === current}
              onClick={() => setCurrent(s)}
              className={`h-[17px] pl-px leading-[17px] whitespace-nowrap ${s === current ? "bg-[#0078d7] text-white" : "text-black"}`}
            >
              {s}
            </li>
          ))}
        </ul>
        <div className="flex w-4 flex-col items-center justify-between py-1">
          <button type="button" aria-label="Scroll up">
            <Chevron dir="up" />
          </button>
          <button type="button" aria-label="Scroll down">
            <Chevron dir="down" />
          </button>
        </div>
      </div>
      <div className="flex h-4 items-center pr-5 pl-[3px]">
        <button type="button" aria-label="Scroll left">
          <Chevron dir="left" />
        </button>
        <span className="mx-1 h-[15px] flex-1 bg-[#cdcdcd]" />
        <button type="button" aria-label="Scroll right">
          <Chevron dir="right" />
        </button>
      </div>
    </div>
  );
}

const field = "h-5 border border-[#abadb3] px-0.5 outline-none";
const pushButton = "h-[21px] border border-[#adadad] bg-[#e1e1e1]";

function HeatRelease() {
  return (
    <div role="tabpanel" className="flex-1 border border-[#dcdcdc] border-t-white pt-[13px] pl-3 shadow-[0_-1px_0_#dcdcdc]">
      <h2 className="flex items-center gap-1.5 pr-[98px] leading-4 after:h-px after:flex-1 after:bg-[#a0a0a0] after:content-['']">Heat Release</h2>
      <div className="flex w-[345px] flex-col gap-2 pt-1.5">
        <div className="flex items-center justify-between pl-[23px]">
          <label className="flex items-center gap-[3px] pt-px">
            <Radio defaultChecked />
            Heat Release Rate Per Area (HRRPUA):
          </label>
          <input aria-label="Heat release rate per area" defaultValue="1000.0 kW/m²" className={`${field} w-[97px] bg-white`} />
        </div>
        <div className="flex items-center justify-between pl-[23px]">
          <label className="flex items-center gap-[3px] pt-px">
            <Radio />
            Mass Loss Rate:
          </label>
          <input aria-label="Mass loss rate" disabled defaultValue="0.0 kg/(m²·s)" className={`${field} w-[97px] bg-[#f0f0f0] text-[#8a8a80]`} />
        </div>
        <div className="flex items-center justify-between pl-[18px]">
          <label htmlFor="ramp" className="pt-px">
            Ramp-Up Time:
          </label>
          <span className="flex items-center gap-1.5">
            <Select id="ramp" value="Default" width="w-[144px]" />
            <input aria-label="Ramp-up time value" readOnly defaultValue="1.0 s" className={`${field} w-[97px] bg-[#f0f0f0]`} />
          </span>
        </div>
        <div className="flex items-center justify-between pl-[18px]">
          <label htmlFor="ext">Extinguishing Coefficient:</label>
          <input id="ext" defaultValue="0.0 m²/(kg·s)" className={`${field} w-[97px] bg-white`} />
        </div>
      </div>
    </div>
  );
}

function Radio({ defaultChecked = false }: { defaultChecked?: boolean }) {
  return (
    <input
      type="radio"
      name="release"
      defaultChecked={defaultChecked}
      className="size-[13px] appearance-none rounded-full border border-[#333] bg-white checked:bg-[#333] checked:shadow-[inset_0_0_0_2px_#fff]"
    />
  );
}

function EditSurfaces() {
  return (
    <section
      role="dialog"
      aria-labelledby="dialog-title"
      className="absolute top-[97px] left-[352px] flex w-[634px] flex-col border border-[#7b7d82] bg-[#f0f0f0] shadow-[2px_2px_8px_rgba(0,0,0,0.5)]"
    >
      <header className="flex h-[30px] items-center bg-white pr-2.5 pl-[7px] font-['Roboto',sans-serif] text-[12px] text-[#8e8e8e]">
        <Logo />
        <h2 id="dialog-title" className="flex-1 pl-[5px]">
          Edit Surfaces
        </h2>
        <button type="button" aria-label="Close dialog">
          <svg width="11" height="11" viewBox="0 0 11 11" fill="none" aria-hidden="true">
            <path d="M.500.500l10 10M10.500.500l-10 10" stroke="#8a8a8a" />
          </svg>
        </button>
      </header>

      <div className="flex gap-[11px] pt-3 pr-3 pb-3 pl-[11px]">
        <div className="flex w-[127px] shrink-0 flex-col">
          <SurfaceList />
          <div className="flex flex-col gap-2 px-px pt-[13px]">
            {["New...", "Add From Library...", "Rename...", "Delete..."].map((b) => (
              <button key={b} type="button" className={`${pushButton} pt-px`}>
                {b}
              </button>
            ))}
          </div>
        </div>

        <div className="flex min-w-0 flex-1 flex-col">
          <div className="grid grid-cols-[81px_1fr] items-center gap-y-[7px]">
            <label htmlFor="sid" className="pt-px">Surface ID:</label>
            <input id="sid" readOnly defaultValue="Fire" className={`${field} bg-[#f0f0f0]`} />
            <label htmlFor="desc">Description:</label>
            <input id="desc" className={`${field} bg-white`} />
            <span>Color:</span>
            <div className="flex items-center pl-px">
              <button type="button" aria-label="Color" className={`${pushButton} flex w-[55px] items-center px-1`}>
                <span className="h-[13px] w-full border border-black bg-[#fe0000]" />
              </button>
              <span className="pr-[13px] pl-3">Appearance:</span>
              <button type="button" aria-label="Appearance" className={`${pushButton} flex w-[61px] items-center justify-center`}>
                <svg width="14" height="14" viewBox="0 0 14 14" fill="none" aria-hidden="true">
                  <circle cx="7" cy="7" r="5.700" stroke="#000" strokeWidth="1.700" />
                  <path d="M11 3l-8 8" stroke="#000" strokeWidth="1.700" />
                </svg>
              </button>
            </div>
            <label htmlFor="stype">Surface Type:</label>
            <Select id="stype" value="Burner" width="w-[102px]" />
          </div>

          <div className="flex items-end pt-1.5 pl-px" role="tablist">
            {["Heat Release", "Thermal", "Geometry", "Particle Injection", "Advanced"].map((t, i) => (
              <button
                key={t}
                type="button"
                role="tab"
                aria-selected={i === 0}
                className={
                  i === 0
                    ? "h-[21px] border-x border-t border-[#dcdcdc] bg-white px-[5px]"
                    : "h-[19px] border-t border-r border-[#dcdcdc] px-1 pt-px"
                }
              >
                {t}
              </button>
            ))}
          </div>
          <div className="flex h-[369px] pr-px pl-px">
            <HeatRelease />
          </div>

          <textarea
            aria-label="FDS record"
            readOnly
            defaultValue="&SURF ID='Fire', COLOR='RED', HRRPUA=1000.0, TMP_FRONT=300.0/"
            className="mt-[13px] h-[69px] resize-none border border-[#a0a0a0] bg-white px-[5px] pt-1 outline-none"
          />

          <div className="flex justify-end gap-[7px] pt-[19px]">
            <button type="button" className={`${pushButton} w-[63px]`}>
              Apply
            </button>
            <button type="button" className="h-[21px] w-[63px] border-2 border-[#0078d7] bg-[#e1e1e1]">
              OK
            </button>
            <button type="button" className={`${pushButton} w-[63px]`}>
              Cancel
            </button>
          </div>
        </div>
      </div>

      <svg width="13" height="20" viewBox="0 0 13 20" aria-hidden="true" className="absolute top-[351px] left-[345px]">
        <path d="M.700 1v15.500l3.500-3.300 2.500 5.800 2.600-1.100-2.500-5.600h4.800z" fill="#fff" stroke="#000" />
      </svg>
    </section>
  );
}

export default function App() {
  return (
    <div className="relative flex min-h-screen flex-col bg-[#17171b] pt-0.5 pr-[3px] pb-0.5 pl-0.5 font-['DejaVu_Sans_Condensed','DejaVu_Sans',sans-serif] text-[11px] text-black">
      <div className="flex flex-1 flex-col bg-[#f0f0f0]">
        <TitleBar />
        <MainToolbar />
        <div className="flex flex-1 gap-2 pl-px">
          <TreePanel />
          <ViewPanel />
        </div>
      </div>
      <EditSurfaces />
    </div>
  );
}
